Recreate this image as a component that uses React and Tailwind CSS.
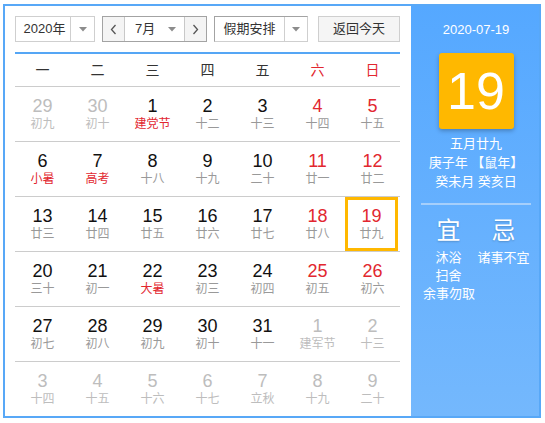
import React from "react";

const FONT = { fontFamily: '"Liberation Sans", "Noto Sans CJK SC", sans-serif' };

// 日历数据: [日, 农历/节日, 类型]
// 类型: o=非本月, w=周末, f=节日(红), s=选中, n=普通
const rows = [
  [["29", "初九", "o"], ["30", "初十", "o"], ["1", "建党节", "f"], ["2", "十二", "n"], ["3", "十三", "n"], ["4", "十四", "w"], ["5", "十五", "w"]],
  [["6", "小暑", "f"], ["7", "高考", "f"], ["8", "十八", "n"], ["9", "十九", "n"], ["10", "二十", "n"], ["11", "廿一", "w"], ["12", "廿二", "w"]],
  [["13", "廿三", "n"], ["14", "廿四", "n"], ["15", "廿五", "n"], ["16", "廿六", "n"], ["17", "廿七", "n"], ["18", "廿八", "w"], ["19", "廿九", "s"]],
  [["20", "三十", "n"], ["21", "初一", "n"], ["22", "大暑", "f"], ["23", "初三", "n"], ["24", "初四", "n"], ["25", "初五", "w"], ["26", "初六", "w"]],
  [["27", "初七", "n"], ["28", "初八", "n"], ["29", "初九", "n"], ["30", "初十", "n"], ["31", "十一", "n"], ["1", "建军节", "o"], ["2", "十三", "o"]],
  [["3", "十四", "o"], ["4", "十五", "o"], ["5", "十六", "o"], ["6", "十七", "o"], ["7", "立秋", "o"], ["8", "十九", "o"], ["9", "二十", "o"]],
];

const weekdays = ["一", "二", "三", "四", "五", "六", "日"];

function Caret() {
  return (
    <svg width="8" height="5" viewBox="0 0 8 5">
      <polygon points="0,0 8,0 4,4.5" fill="#8c8c8c" />
    </svg>
  );
}

function Chevron({ dir }) {
  return (
    <svg width="7" height="11" viewBox="0 0 7 11">
      <polyline
        points={dir === "left" ? "5.5,1 1.5,5.5 5.5,10" : "1.5,1 5.5,5.5 1.5,10"}
        fill="none"
        stroke="#555"
        strokeWidth="1.3"
      />
    </svg>
  );
}

function DayCell({ day }) {
  const [num, lunar, kind] = day;
  let numCls = "text-[#111]";
  let lunarCls = "text-[#999]";
  if (kind === "o") {
    numCls = "text-[#bdbdbd]";
    lunarCls = "text-[#bdbdbd]";
  } else if (kind === "w" || kind === "s") {
    numCls = "text-[#e2272f]";
  } else if (kind === "f") {
    lunarCls = "text-[#e2272f]";
  }
  const selected = kind === "s";
  return (
    <div className="flex h-full">
      <div
        className={
          selected
            ? "w-[53px] h-full flex flex-col items-center justify-center border-[3px] border-[#ffb800]"
            : "w-full h-full flex flex-col items-center justify-center"
        }
      >
        <span className={`text-[18px] leading-[20px] ${numCls}`}>{num}</span>
        <span className={`text-[12px] leading-[17px] ${lunarCls}`}>{lunar}</span>
      </div>
    </div>
  );
}

export default function App() {
  return (
    <div className="w-[545px] h-[423px] bg-white pt-[4px] pl-[3px]" style={FONT}>
      <div className="w-[538px] h-[414px] border-2 border-[#58a8f7] flex">
        {/* 左侧日历 */}
        <div className="w-[406px] h-full pl-[10px] pr-[11px] pt-[10px] bg-white">
          {/* 控制栏 */}
          <div className="flex h-[26px] text-[13px] text-[#333]">
            <div className="w-[80px] h-full flex border border-[#cfcfcf] bg-white">
              <div className="w-[54px] flex items-center justify-center pl-[3px]">2020年</div>
              <div className="flex-1 flex items-center justify-center border-l border-[#cfcfcf]">
                <Caret />
              </div>
            </div>
            <div className="ml-[7px] w-[105px] h-full flex border border-[#a3a3a3]">
              <div className="w-[22px] flex items-center justify-center bg-[#f4f4f4] border-r border-[#c8c8c8]">
                <Chevron dir="left" />
              </div>
              <div className="flex-1 flex items-center bg-white">
                <span className="ml-[10px] w-[33px]">7月</span>
                <span className="flex items-center">
                  <Caret />
                </span>
              </div>
              <div className="w-[22px] flex items-center justify-center bg-[#f4f4f4] border-l border-[#c8c8c8]">
                <Chevron dir="right" />
              </div>
            </div>
            <div className="ml-[7px] w-[94px] h-full flex border border-[#cfcfcf] border-t-[#a3a3a3] border-l-[#a3a3a3] bg-white">
              <div className="w-[69px] flex items-center justify-center">假期安排</div>
              <div className="flex-1 flex items-center justify-center border-l border-[#cfcfcf]">
                <Caret />
              </div>
            </div>
            <div className="ml-[10px] w-[82px] h-full flex items-center justify-center border border-[#cfcfcf] bg-[#f5f5f5]">
              返回今天
            </div>
          </div>

          {/* 星期栏 */}
          <div className="mt-[10px] border-t-2 border-[#55a6f5] grid grid-cols-7 h-[34px] text-[14px]">
            {weekdays.map((w, i) => (
              <div
                key={w}
                className={`flex items-center justify-center ${i >= 5 ? "text-[#e2272f]" : "text-[#333]"}`}
              >
                {w}
              </div>
            ))}
          </div>

          {/* 日期 */}
          {rows.map((row, r) => (
            <div key={r} className="grid grid-cols-7 h-[55px] border-t border-[#cccccc]">
              {row.map((d, c) => (
                <DayCell key={c} day={d} />
              ))}
            </div>
          ))}
        </div>

        {/* 右侧详情 */}
        <div className="flex-1 h-full bg-gradient-to-b from-[#55a8ff] to-[#74b8fd] text-white flex flex-col">
          <div className="pt-[14px] pl-[2px] text-center text-[13px] leading-[19px]">2020-07-19</div>
          <div className="mt-[14px] self-center ml-[2px] w-[75px] h-[76px] rounded-[3px] bg-[#ffb800] shadow-[0_2px_4px_rgba(0,0,0,0.25)] flex items-center justify-center text-[52px] leading-none">
            19
          </div>
          <div className="mt-[5px] pl-[2px] text-center text-[13px] leading-[19px]">
            <div>五月廿九</div>
            <div>庚子年 【鼠年】</div>
            <div>癸未月 癸亥日</div>
          </div>
          <div className="mt-[12px] ml-[10px] w-[110px] h-[2px] bg-[#a6cffb]" />
          <div className="ml-[10px] w-[110px] flex mt-[12px]">
            <div className="w-[55px] flex flex-col items-center">
              <div className="text-[24px] leading-[28px] [text-shadow:0_1px_2px_rgba(0,0,0,0.2)]">宜</div>
              <div className="mt-[4px] text-[13px] leading-[18px]">沐浴</div>
              <div className="text-[13px] leading-[18px]">扫舍</div>
            </div>
            <div className="w-[55px] flex flex-col items-center">
              <div className="text-[24px] leading-[28px] [text-shadow:0_1px_2px_rgba(0,0,0,0.2)]">忌</div>
              <div className="mt-[4px] text-[13px] leading-[18px] whitespace-nowrap">诸事不宜</div>
            </div>
          </div>
          <div className="ml-[12px] text-[13px] leading-[18px]">余事勿取</div>
        </div>
      </div>
    </div>
  );
}
